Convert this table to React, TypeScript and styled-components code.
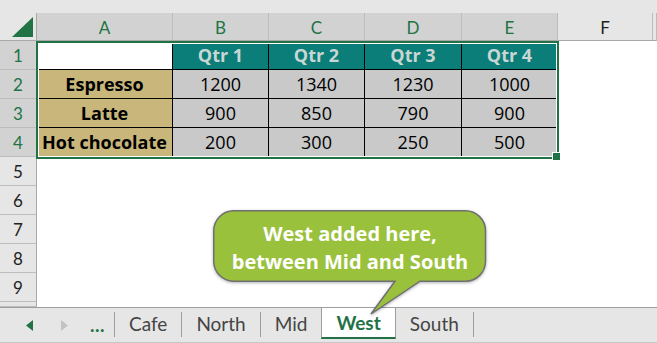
import styled, { createGlobalStyle } from "styled-components"

const GlobalStyle = createGlobalStyle`
  body {
    margin: 0;
    font-family: Lato, "Open Sans", sans-serif;
    background: #ffffff;
  }
`

const green = "#217346"

const Frame = styled.div`
  position: relative;
  width: 657px;
  height: 343px;
  overflow: hidden;
  background: #ffffff;
`

const TopStrip = styled.div`
  height: 13px;
  background: #e6e6e6;
`

const Sheet = styled.div`
  display: grid;
  grid-template-columns: 37px 136px 96px 96px 97px 96px 95px 1fr;
  grid-template-rows: 28px repeat(9, 29px) 5px;
`

const Corner = styled.div`
  background: #e6e6e6;
  border-right: 1px solid #a8a8a8;
  border-bottom: 1px solid #a8a8a8;
  display: flex;
  align-items: flex-end;
  justify-content: flex-end;
  padding: 0 3px 3px 0;
`

const ColHeader = styled.div<{ $selected?: boolean }>`
  display: flex;
  align-items: center;
  justify-content: center;
  font-size: 17px;
  padding-top: 1px;
  color: ${(p) => (p.$selected ? green : "#222222")};
  background: ${(p) => (p.$selected ? "#d2d2d2" : "#e6e6e6")};
  border-right: 1px solid #bcbcbc;
  border-bottom: 1px solid #a8a8a8;
`

const RowHeader = styled.div<{ $selected?: boolean }>`
  display: flex;
  align-items: center;
  justify-content: center;
  font-size: 17px;
  color: ${(p) => (p.$selected ? green : "#222222")};
  background: ${(p) => (p.$selected ? "#d2d2d2" : "#e6e6e6")};
  border-right: 1px solid #a8a8a8;
  border-bottom: 1px solid #bcbcbc;
`

const Cell = styled.div<{ $fill?: string; $bold?: boolean; $color?: string; $boxed?: boolean }>`
  display: flex;
  align-items: center;
  justify-content: center;
  white-space: nowrap;
  font-family: "Open Sans", Lato, sans-serif;
  font-size: 18px;
  font-weight: ${(p) => (p.$bold ? 700 : 400)};
  color: ${(p) => p.$color ?? "#000000"};
  background: ${(p) => p.$fill ?? "#ffffff"};
  border-right: 1px solid ${(p) => (p.$boxed ? "#000000" : "transparent")};
  border-bottom: 1px solid ${(p) => (p.$boxed ? "#000000" : "transparent")};
`

const Selection = styled.div`
  position: absolute;
  left: 36px;
  top: 41px;
  width: 523px;
  height: 118px;
  box-sizing: border-box;
  border: 2px solid ${green};
  box-shadow: inset 0 0 0 1px #ffffff;
  pointer-events: none;
`

const FillHandle = styled.div`
  position: absolute;
  left: 552px;
  top: 152px;
  width: 7px;
  height: 7px;
  background: ${green};
  border: 1px solid #ffffff;
`

const TabBar = styled.div`
  display: flex;
  height: 34px;
  background: #e6e6e6;
  border-top: 1px solid #9e9e9e;
  border-bottom: 1px solid #c8c8c8;
`

const NavArea = styled.div`
  width: 115px;
  display: flex;
  align-items: center;
  padding-left: 26px;
  box-sizing: border-box;
  position: relative;

  &::after {
    content: "";
    position: absolute;
    right: 0;
    top: 4px;
    height: 25px;
    width: 1px;
    background: #9d9d9d;
  }
`

const NavArrow = styled.svg<{ $gap?: number }>`
  display: block;
  flex: none;
  margin-left: ${(p) => p.$gap ?? 0}px;
`

const Ellipsis = styled.span`
  margin-left: 22px;
  font-size: 19px;
  font-weight: 700;
  color: ${green};
  letter-spacing: 0.5px;
  line-height: 1;
  padding-bottom: 2px;
`

const Tab = styled.div<{ $active?: boolean }>`
  position: relative;
  display: flex;
  align-items: center;
  align-self: flex-start;
  box-sizing: border-box;
  height: ${(p) => (p.$active ? "31px" : "30px")};
  padding: 0 14px;
  font-size: 19px;
  font-weight: ${(p) => (p.$active ? 700 : 400)};
  color: ${(p) => (p.$active ? green : "#444444")};
  background: ${(p) => (p.$active ? "#ffffff" : "transparent")};
  border-left: ${(p) => (p.$active ? "1px solid #9d9d9d" : "none")};
  border-right: 1px solid ${(p) => (p.$active ? "#9d9d9d" : "transparent")};
  border-bottom: ${(p) => (p.$active ? `2px solid ${green}` : "none")};
  margin-left: ${(p) => (p.$active ? "-1px" : "0")};

  &::after {
    content: "";
    display: ${(p) => (p.$active ? "none" : "block")};
    position: absolute;
    right: -1px;
    top: 4px;
    height: 25px;
    width: 1px;
    background: #9d9d9d;
  }
`

const Callout = styled.div`
  position: absolute;
  left: 213px;
  top: 210px;
  width: 274px;
  height: 72px;
  padding-top: 3px;
  box-sizing: border-box;
  display: flex;
  flex-direction: column;
  align-items: center;
  justify-content: center;
  z-index: 2;
`

const CalloutShape = styled.svg`
  position: absolute;
  left: 0;
  top: 0;
  overflow: visible;
  filter: drop-shadow(0 1px 1.5px rgba(0, 0, 0, 0.3));
`

const CalloutLine = styled.span`
  position: relative;
  font-family: "Open Sans", Lato, sans-serif;
  font-size: 20px;
  font-weight: 700;
  line-height: 28px;
  color: #ffffff;
  white-space: nowrap;
`

const columns = ["A", "B", "C", "D", "E", "F"]

const rows = [
  { label: "", values: ["Qtr 1", "Qtr 2", "Qtr 3", "Qtr 4"] },
  { label: "Espresso", values: ["1200", "1340", "1230", "1000"] },
  { label: "Latte", values: ["900", "850", "790", "900"] },
  { label: "Hot chocolate", values: ["200", "300", "250", "500"] },
]

const tabs = ["Cafe", "North", "Mid", "West", "South"]

export default function App() {
  return (
    <Frame>
      <GlobalStyle />
      <TopStrip />
      <Sheet>
        <Corner>
          <svg width="21" height="20" viewBox="0 0 21 20">
            <polygon points="21,0 21,20 0,20" fill={green} />
          </svg>
        </Corner>
        {columns.map((c) => (
          <ColHeader key={c} $selected={c !== "F"}>
            {c}
          </ColHeader>
        ))}
        <ColHeader />

        {rows.map((row, i) => (
          <>
            <RowHeader key={`r${i}`} $selected>
              {i + 1}
            </RowHeader>
            {i === 0 ? (
              <Cell key={`a${i}`} $boxed />
            ) : (
              <Cell key={`a${i}`} $boxed $bold $fill="#c8b67b">
                {row.label}
              </Cell>
            )}
            {row.values.map((v, j) =>
              i === 0 ? (
                <Cell key={`v${i}${j}`} $boxed $bold $fill="#0b7e79" $color="#c9d6d4">
                  {v}
                </Cell>
              ) : (
                <Cell key={`v${i}${j}`} $boxed $fill="#c9c9c9">
                  {v}
                </Cell>
              )
            )}
            <Cell key={`f${i}`} />
            <Cell key={`g${i}`} />
          </>
        ))}

        {[5, 6, 7, 8, 9, 10].map((n) => (
          <>
            <RowHeader key={`r${n}`}>{n === 10 ? "" : n}</RowHeader>
            {[0, 1, 2, 3, 4, 5, 6].map((k) => (
              <Cell key={`e${n}${k}`} />
            ))}
          </>
        ))}
      </Sheet>

      <TabBar>
        <NavArea>
          <NavArrow width="7" height="11" viewBox="0 0 7 11">
            <polygon points="7,0 7,11 0,5.5" fill={green} />
          </NavArrow>
          <NavArrow width="7" height="11" viewBox="0 0 7 11" $gap={28}>
            <polygon points="0,0 0,11 7,5.5" fill="#c2c2c2" />
          </NavArrow>
          <Ellipsis>...</Ellipsis>
        </NavArea>
        {tabs.map((t) => (
          <Tab key={t} $active={t === "West"}>
            {t}
          </Tab>
        ))}
      </TabBar>

      <Selection />
      <FillHandle />

      <Callout>
        <CalloutShape width="274" height="106" viewBox="0 0 274 106">
          <path
            d="M20.5,0.75 H252.5 A20,20 0 0 1 272.5,20.75 V51.25 A20,20 0 0 1 252.5,71.25 H207 L158,104 L182,71.25 H20.5 A20,20 0 0 1 0.75,51.25 V20.75 A20,20 0 0 1 20.5,0.75 Z"
            fill="#9ac13c"
            stroke="#707070"
            strokeWidth="1.5"
          />
        </CalloutShape>
        <CalloutLine>West added here,</CalloutLine>
        <CalloutLine>between Mid and South</CalloutLine>
      </Callout>
    </Frame>
  )
}
